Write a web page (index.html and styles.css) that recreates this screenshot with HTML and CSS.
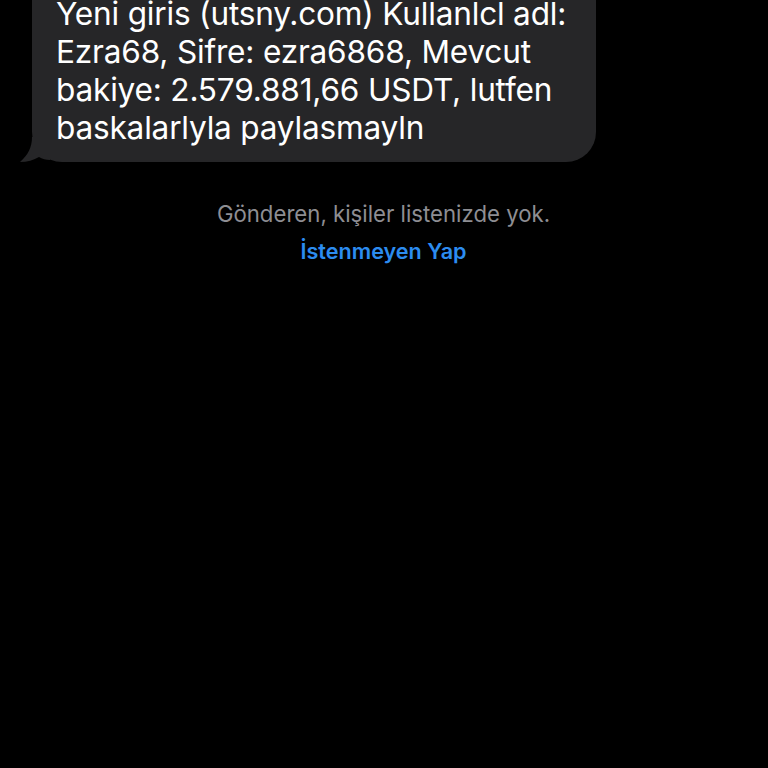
FILE: index.html
```html
<!DOCTYPE html>
<html lang="tr">
<head>
<meta charset="utf-8">
<link rel="stylesheet" href="styles.css">
</head>
<body>
<main class="thread">
  <div class="row">
    <div class="bubble">
      <p class="msg">Yeni giris (utsny.com) Kullanlcl adl:<br>Ezra68, Sifre: ezra6868, Mevcut<br>bakiye: 2.579.881,66 USDT, lutfen<br>baskalarlyla paylasmayln</p>
      <svg class="tail" width="30" height="26" viewBox="0 0 30 26"><path d="M12 0 C12 10 8 18 0 25 C7 25 14 23 19 20 C22 22 26 23 30 23 L30 0 Z" fill="#262628"/></svg>
    </div>
  </div>
  <div class="notice">
    <p class="info">Gönderen, kişiler listenizde yok.</p>
    <p class="action">İstenmeyen Yap</p>
  </div>
</main>
</body>
</html>
```

FILE: styles.css
```css
html, body {
  margin: 0;
  padding: 0;
  background: #000;
  height: 100%;
  overflow: hidden;
}
.thread {
  display: flex;
  flex-direction: column;
  font-family: Inter, "Noto Sans", sans-serif;
}
.row {
  display: flex;
  padding-left: 32px;
}
.bubble {
  position: relative;
  width: 564px;
  box-sizing: border-box;
  background: #262628;
  border-radius: 30px;
  margin-top: -37px;
  padding: 32px 6px 15px 24px;
}
.msg {
  margin: 0;
  color: #fff;
  font-size: 31.6px;
  line-height: 38px;
  letter-spacing: -0.2px;
}
.tail {
  position: absolute;
  left: -12px;
  bottom: -1px;
}
.notice {
  display: flex;
  flex-direction: column;
  align-items: center;
  padding-top: 38px;
  padding-right: 1px;
  gap: 9px;
}
.info {
  margin: 0;
  color: #8e8e93;
  font-size: 22.2px;
  line-height: 28px;
}
.action {
  margin: 0;
  color: #2c8cf0;
  font-size: 21.6px;
  font-weight: 600;
  line-height: 28px;
}
```
